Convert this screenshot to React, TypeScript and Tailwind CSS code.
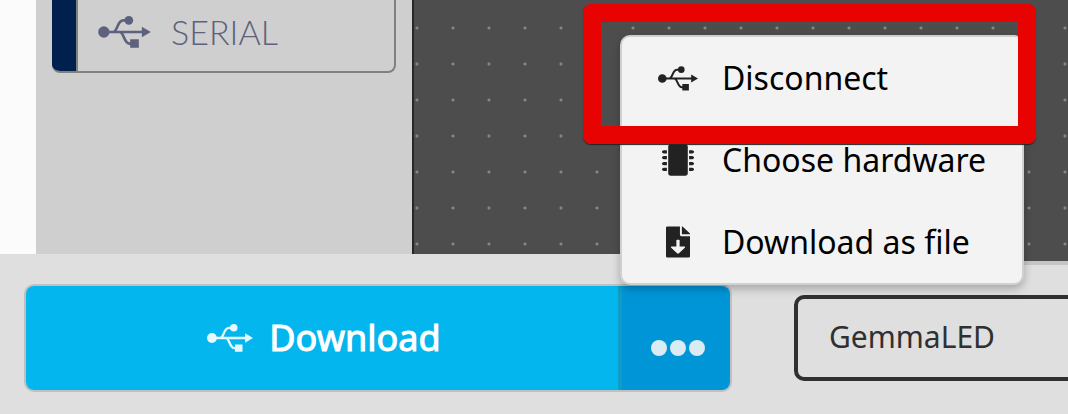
import type { ReactNode } from "react";

function UsbIcon({ className }: { className: string }) {
  return (
    <svg viewBox="0 0 158 96" className={className} fill="currentColor" aria-hidden="true">
      <circle cx="17" cy="48" r="17" />
      <circle cx="92" cy="13" r="13" />
      <path d="M96 70h26v25H96zM131 32l27 16-27 16z" />
      <path
        d="M17 48h118M46 48C60 44 56 13 76 13h16M66 48c12 4 12 35 28 35h8"
        fill="none"
        stroke="currentColor"
        strokeWidth="8"
      />
    </svg>
  );
}

function ChipIcon() {
  return (
    <svg viewBox="0 0 98 96" className="h-8 w-8" fill="currentColor" aria-hidden="true">
      <rect x="19" y="0" width="60" height="96" rx="8" />
      <path d="M5 18h10v10H5l-5-3v-4zM5 36h10v10H5l-5-3v-4zM5 54h10v10H5l-5-3v-4zM5 72h10v10H5l-5-3v-4zM93 18H83v10h10l5-3v-4zM93 36H83v10h10l5-3v-4zM93 54H83v10h10l5-3v-4zM93 72H83v10h10l5-3v-4z" />
    </svg>
  );
}

function FileIcon() {
  return (
    <svg viewBox="0 0 74 96" className="h-8 w-6" fill="currentColor" aria-hidden="true">
      <path
        fillRule="evenodd"
        d="M4 0h39v26q0 4 4 4h27v62q0 4-4 4H4q-4 0-4-4V4q0-4 4-4zM32 43v19H17q-3 1-1 4l18 17q3 2 6 0l18-17q2-3-1-4H42V43q0-2-2-2h-6q-2 0-2 2z"
      />
      <path d="M49 0h2l23 22v2H49z" />
    </svg>
  );
}

function MenuItem({ icon, label }: { icon: ReactNode; label: string }) {
  return (
    <li>
      <button type="button" className="flex h-[82px] w-full items-center pl-9 text-left text-[#222]">
        <span className="flex w-10 shrink-0 justify-center">{icon}</span>
        <span className="pl-6 text-[32px] leading-10 text-black">{label}</span>
      </button>
    </li>
  );
}

export default function App() {
  return (
    <div className="relative flex flex-col overflow-hidden bg-[#dfdfdf] font-['Noto_Sans',sans-serif]">
      <main className="flex h-[254px]">
        <div className="w-9 shrink-0 bg-[#fbfbfb]" />
        <nav className="w-[376px] shrink-0 bg-[#cfcfcf] px-4">
          <button
            type="button"
            className="flex h-[73px] w-full items-center overflow-hidden rounded-b-lg border-r-2 border-b-2 border-[#80807e] text-[#5c617d]"
          >
            <span className="h-[73px] w-[26px] shrink-0 border-r-2 border-[#80807e] bg-[#00204d]" />
            <span className="flex items-center pb-2 pl-5">
              <UsbIcon className="h-8 w-[53px]" />
              <span className="pl-5 font-['Lato',sans-serif] text-[34px] leading-10 font-light">SERIAL</span>
            </span>
          </button>
        </nav>
        <div className="h-[261px] min-w-0 grow border-l-2 border-[#272727] bg-[#4d4d4e] bg-[radial-gradient(circle,#858585_1px,transparent_2px)] bg-[size:36px_36px] bg-[position:-15px_10px]" />
      </main>

      <footer className="relative flex h-40 items-start">
        <div className="flex h-full w-[760px] shrink-0 bg-[#dfdfdf] pt-[30px] pl-6">
          <div className="flex h-[108px] w-[708px] overflow-hidden rounded-[10px] border-2 border-[#c0c0c0] text-white">
            <button type="button" className="flex grow items-center justify-center bg-[#03b7ee] pl-1">
              <UsbIcon className="h-7 w-[46px] opacity-90" />
              <span className="pl-4 text-[36px] leading-10 [-webkit-text-stroke:1px_currentColor]">Download</span>
            </button>
            <button
              type="button"
              aria-label="More options"
              className="flex w-[112px] items-center justify-center gap-[3px] border-l-4 border-[#0f9cc5] bg-[#0095d7] pt-5 pl-1"
            >
              <span className="size-4 rounded-full bg-[#d9ebf3]" />
              <span className="size-4 rounded-full bg-[#d9ebf3]" />
              <span className="size-4 rounded-full bg-[#d9ebf3]" />
            </button>
          </div>
        </div>
        <div className="mt-[7px] h-[153px] min-w-0 grow overflow-hidden border-t-4 border-[#c5c5c5] bg-[#dfdfdf] pt-[30px] pl-[34px]">
          <input
            type="text"
            aria-label="Project name"
            defaultValue="GemmaLED"
            className="h-[86px] w-[360px] rounded-[10px] border-4 border-[#303030] bg-transparent pb-1 pl-[31px] text-[30px] text-[#303030] outline-none"
          />
        </div>
      </footer>

      <ul className="absolute top-[35px] left-[620px] w-[404px] rounded-[10px] border-2 border-[#d0d0d0] bg-[#f3f3f3] shadow-[0_4px_8px_rgba(0,0,0,0.25)]">
        <MenuItem icon={<UsbIcon className="h-[25px] w-[41px]" />} label="Disconnect" />
        <MenuItem icon={<ChipIcon />} label="Choose hardware" />
        <MenuItem icon={<FileIcon />} label="Download as file" />
      </ul>
      <div className="pointer-events-none absolute top-1 left-[583px] h-[140px] w-[453px] rounded-lg border-[18px] border-[#e60302] shadow-[0_1px_1px_#222]" />
    </div>
  );
}
